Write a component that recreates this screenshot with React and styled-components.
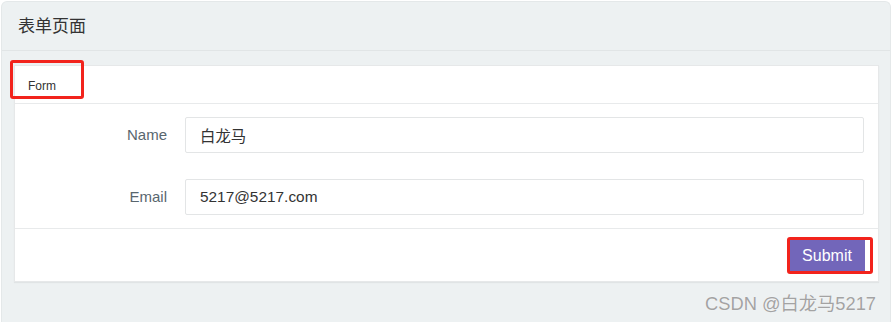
import React from "react";
import styled, { createGlobalStyle } from "styled-components";

const GlobalStyle = createGlobalStyle`
  html, body {
    margin: 0;
    padding: 0;
    background: #ffffff;
  }
  * {
    box-sizing: border-box;
  }
  body {
    font-family: "Liberation Sans", Arial, "Noto Sans CJK SC", sans-serif;
  }
`;

const Page = styled.div`
  width: 892px;
  height: 322px;
  padding: 1px 1px 0 1px;
  overflow: hidden;
`;

const Panel = styled.div`
  position: relative;
  height: 100%;
  background: #edf1f2;
  border: 1px solid #e4e8e9;
  border-bottom: none;
  border-radius: 6px 6px 0 0;
`;

const PanelHeader = styled.div`
  height: 49px;
  display: flex;
  align-items: center;
  padding-left: 16px;
  padding-bottom: 3px;
  border-bottom: 1px solid #e1e5e6;
  font-size: 17px;
  color: #333333;
  font-family: "Liberation Sans", "Noto Sans CJK SC", sans-serif;
`;

const PanelBody = styled.div`
  padding: 14px 11px 0 12px;
`;

const Card = styled.div`
  background: #ffffff;
  border: 1px solid #e6e8e9;
  box-shadow: 0 1px 1px rgba(0, 0, 0, 0.05);
`;

const CardHeader = styled.div`
  position: relative;
  height: 38px;
  display: flex;
  align-items: center;
  padding-left: 13px;
  padding-top: 2px;
  border-bottom: 1px solid #e8eaeb;
  font-size: 12px;
  color: #333333;
`;

const Mark = styled.span`
  position: absolute;
  left: ${(p) => p.$left}px;
  top: ${(p) => p.$top}px;
  width: ${(p) => p.$width}px;
  height: ${(p) => p.$height}px;
  border: 3px solid #f2231c;
  border-radius: 3px;
  pointer-events: none;
`;

const FormBody = styled.div`
  display: flex;
  flex-direction: column;
  gap: 26px;
  padding: 13px 14px 13px 0;
`;

const Row = styled.div`
  display: flex;
  align-items: center;
`;

const Label = styled.label`
  width: 152px;
  margin-right: 18px;
  margin-bottom: 2px;
  text-align: right;
  font-size: 15px;
  color: #58666e;
`;

const Input = styled.input`
  flex: 1;
  height: 36px;
  padding: 0 14px;
  border: 1px solid #e3e5e6;
  border-radius: 2px;
  font-size: 15.4px;
  color: #333333;
  font-family: "Liberation Sans", Arial, "Noto Sans CJK SC", sans-serif;
  outline: none;
  background: #ffffff;
`;

const CardFooter = styled.div`
  display: flex;
  justify-content: flex-end;
  padding: 11px 8px 10px 0;
  border-top: 1px solid #e8eaeb;
`;

const ButtonWrap = styled.div`
  position: relative;
  display: flex;
  padding-right: 5px;
  background: #ffffff;
`;

const Button = styled.button`
  width: 75px;
  height: 31px;
  border: none;
  border-radius: 0;
  background: #7266ba;
  color: #ffffff;
  font-size: 16px;
  font-family: "Liberation Sans", Arial, sans-serif;
  padding: 0 1px 0 0;
  cursor: pointer;
`;

const Watermark = styled.div`
  position: absolute;
  right: 14px;
  bottom: 7px;
  font-size: 18.3px;
  color: #a3a3a3;
  text-shadow: 0 0 1px #ffffff;
  font-family: "Liberation Sans", Arial, "Noto Sans CJK SC", sans-serif;
`;

export default function App() {
  return (
    <>
      <GlobalStyle />
      <Page>
        <Panel>
          <PanelHeader>表单页面</PanelHeader>
          <PanelBody>
            <Card>
              <CardHeader>
                Form
                <Mark $left={-5} $top={-6} $width={74} $height={39} />
              </CardHeader>
              <FormBody>
                <Row>
                  <Label>Name</Label>
                  <Input defaultValue="白龙马" />
                </Row>
                <Row>
                  <Label>Email</Label>
                  <Input defaultValue="5217@5217.com" />
                </Row>
              </FormBody>
              <CardFooter>
                <ButtonWrap>
                  <Button>Submit</Button>
                  <Mark $left={-3} $top={-3} $width={86} $height={37} />
                </ButtonWrap>
              </CardFooter>
            </Card>
          </PanelBody>
          <Watermark>CSDN @白龙马5217</Watermark>
        </Panel>
      </Page>
    </>
  );
}
